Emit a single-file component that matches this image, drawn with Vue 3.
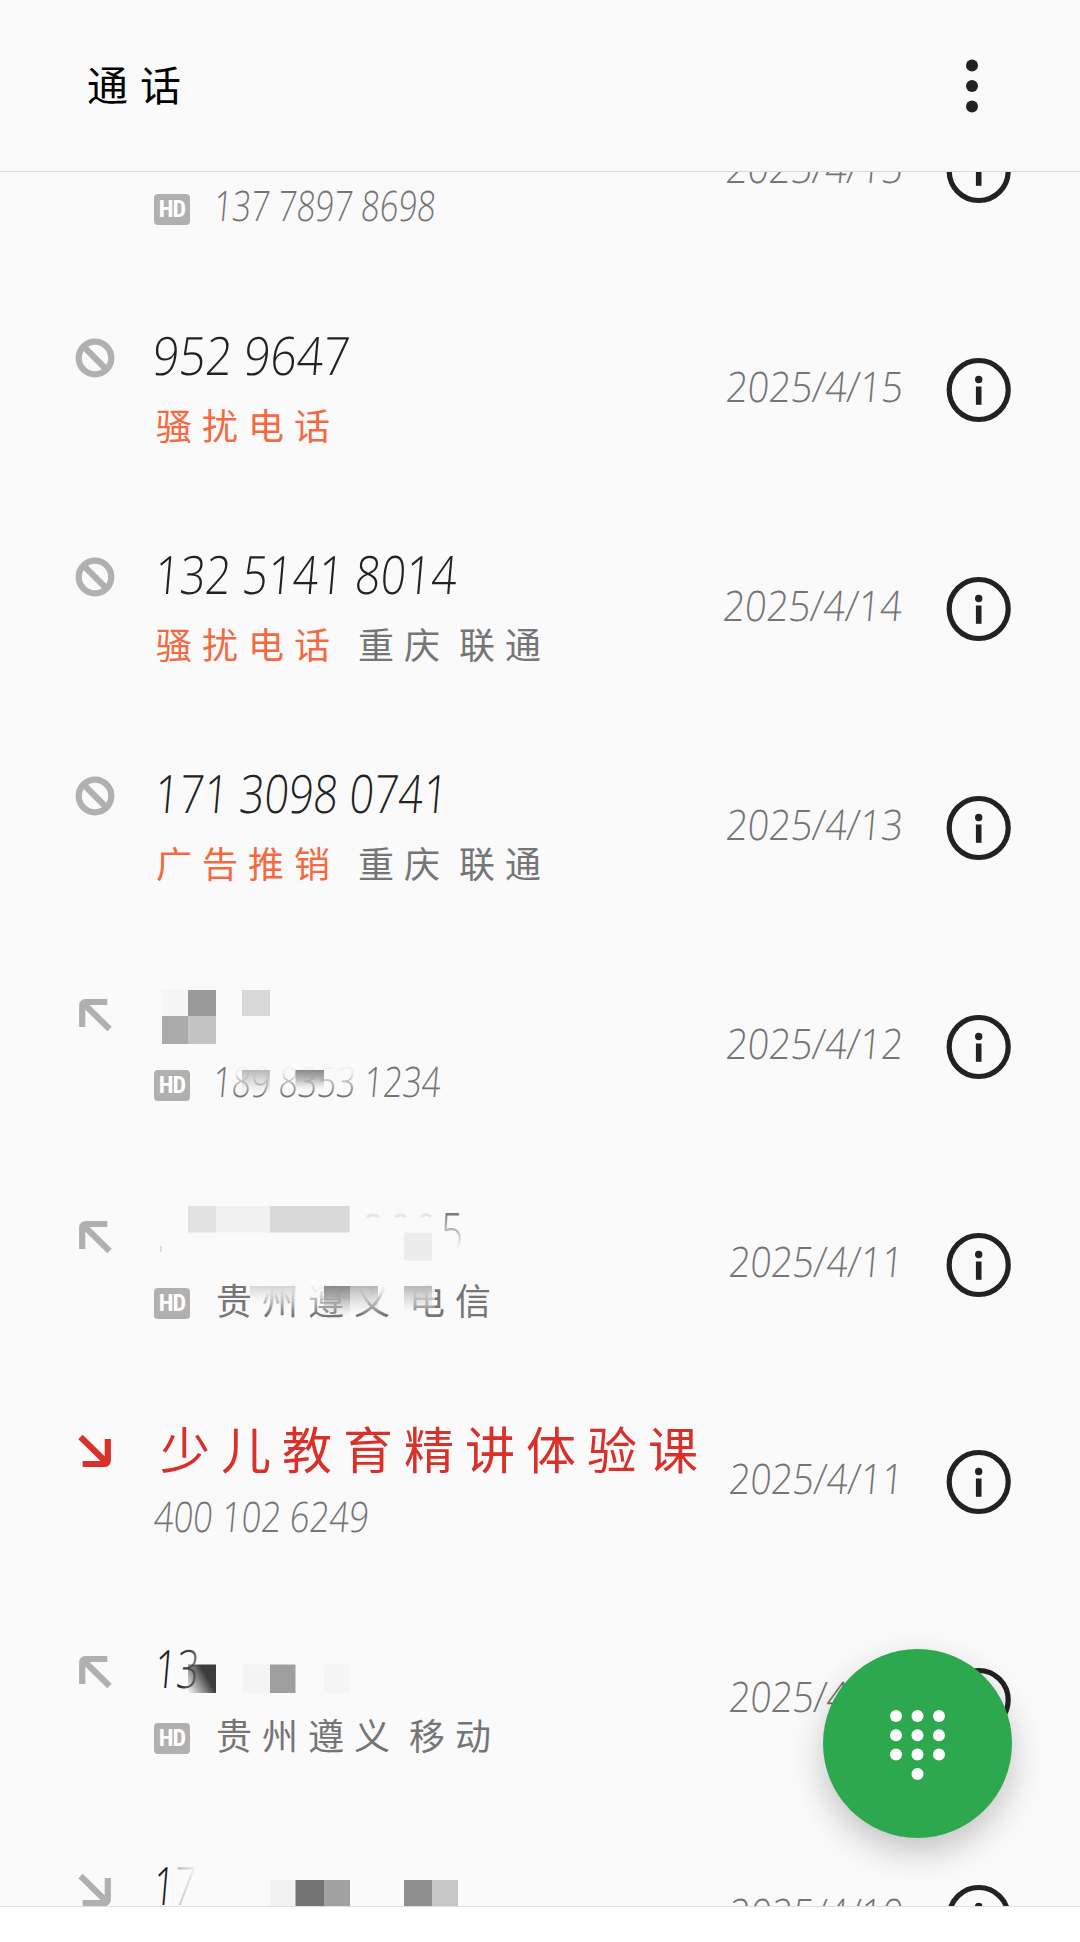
<script setup>
// x / w are the left edge and the width of a number inside its line
const calls = [
  { sub: '137 7897 8698', subX: 24, subW: 222, hd: true, date: '2025/4/15', dx: 3, dw: 177 },
  { icon: 'ban', title: '952 9647', x: -1, w: 197, tag: '骚扰电话', date: '2025/4/15', dx: 3, dw: 177 },
  { icon: 'ban', title: '132 5141 8014', x: 1, w: 302, tag: '骚扰电话', place: '重庆 联通', date: '2025/4/14', dx: 0, dw: 179 },
  { icon: 'ban', title: '171 3098 0741', x: 1, w: 293, tag: '广告推销', place: '重庆 联通', date: '2025/4/13', dx: 3, dw: 177 },
  { icon: 'out', sub: '189 8353 1234', subX: 23, subW: 228, hd: true, date: '2025/4/12', dx: 3, dw: 177 },
  { icon: 'out', low: true, hd: true, place: '贵州遵义 电信', date: '2025/4/11', dx: 6, dw: 174 },
  { icon: 'in', missed: true, name: '少儿教育精讲体验课', sub: '400 102 6249', subX: 0, subW: 215, date: '2025/4/11', dx: 6, dw: 174 },
  { icon: 'out', low: true, title: '13', x: 1, w: 44, fade: 'fade13', hd: true, place: '贵州遵义 移动', date: '2025/4/11', dx: 6, dw: 174 },
  { icon: 'in', low: true, title: '17', x: 0, w: 41, fade: 'fade17', date: '2025/4/10', dx: 6, dw: 174 },
]

// mosaic tiles: x, y, width, height, fill (y counts from the top of the list)
const tiles = [
  [162, 929, 26, 26, '#f5f5f5'], [188, 929, 28, 26, '#9a9a9a'],
  [162, 955, 26, 28, '#aaaaaa'], [188, 955, 28, 28, '#c4c4c4'],
  [242, 929, 28, 26, '#d8d8d8'],
  [242, 1009, 28, 24, 'url(#tileMid)'], [295.5, 1009, 28.5, 20, 'url(#tileDark)'],
  [188, 1145, 28, 26.5, '#e2e2e2'], [216, 1145, 54, 26.5, '#f1f1f1'], [270, 1145, 79.5, 26.5, '#d8d8d8'],
  [404, 1171.5, 28, 28, '#ececec'],
  [250, 1225, 20, 16, 'url(#tileLight)'], [270, 1225, 25.5, 22, 'url(#tileLight)'],
  [324, 1225, 26, 30, 'url(#tileDark)'], [350, 1225, 28, 28, 'url(#tileMid)'], [404, 1225, 28, 26, 'url(#tileMid)'],
  [188, 1603.5, 28, 28.5, 'url(#tileBlack)'], [243, 1603.5, 27, 28.5, '#f4f4f4'],
  [270, 1603.5, 25.5, 28.5, '#9f9f9f'], [324, 1603.5, 26, 28.5, '#f5f5f5'],
  [270, 1819, 25.5, 27.5, '#f2f2f2'], [295.5, 1819, 28.5, 27.5, '#747474'], [324, 1819, 26, 27.5, '#a1a1a1'],
  [404, 1819, 28, 27.5, '#8f8f8f'], [432, 1819, 26, 27.5, '#c7c7c7'],
]

const keys = [
  [8, 8], [29.5, 8], [51, 8],
  [8, 27.3], [29.5, 27.3], [51, 27.3],
  [8, 46.6], [29.5, 46.6], [51, 46.6],
  [29.5, 65.9],
]
</script>

<template>
  <div class="page">
    <header class="header">
      <h1>通话</h1>
      <svg class="more" width="14" height="56" viewBox="0 0 14 56">
        <circle cx="7" cy="7.5" r="6" />
        <circle cx="7" cy="28" r="6" />
        <circle cx="7" cy="48.5" r="6" />
      </svg>
    </header>

    <main class="viewport">
      <div class="list">
        <div v-for="(call, i) in calls" :key="i" class="row" :class="{ short: i > 4, low: call.low, missed: call.missed }">
          <div class="status">
            <svg v-if="call.icon === 'ban'" width="40" height="40" viewBox="0 0 40 40">
              <circle cx="20" cy="20" r="16.3" />
              <path d="M8.5 8.5L31.5 31.5" />
            </svg>
            <svg v-else-if="call.icon" :class="call.icon" width="40" height="40" viewBox="0 0 40 40">
              <path d="M32.3 7H10.5a3.3 3.3 0 0 0-3.3 3.3V32M8.5 8.5L34.5 34" />
            </svg>
          </div>

          <div class="info">
            <div class="line">
              <span v-if="call.name" class="name">{{ call.name }}</span>
              <svg v-if="call.title" class="digits big" width="320" height="70">
                <text :x="call.x" y="54.5" :textLength="call.w" lengthAdjust="spacingAndGlyphs" :class="call.fade">{{ call.title }}</text>
              </svg>
            </div>
            <div class="line second">
              <span v-if="call.hd" class="hd">HD</span>
              <span v-if="call.tag" class="tag">{{ call.tag }}</span>
              <svg v-if="call.sub" class="digits" :width="call.subX + call.subW" height="70">
                <text :x="call.subX" y="50" :textLength="call.subW" lengthAdjust="spacingAndGlyphs">{{ call.sub }}</text>
              </svg>
              <span v-if="call.place" class="place">{{ call.place }}</span>
            </div>
          </div>

          <svg class="digits date" width="180" height="70">
            <text :x="call.dx" y="47.5" :textLength="call.dw" lengthAdjust="spacingAndGlyphs">{{ call.date }}</text>
          </svg>

          <svg class="detail" width="66" height="66" viewBox="0 0 66 66">
            <circle cx="32.7" cy="33" r="29.5" fill="none" stroke="#222" stroke-width="5.2" />
            <circle cx="32.7" cy="22.5" r="3.7" fill="#222" />
            <path d="M29.9 29.5h5.6v18.3h-5.6z" fill="#222" />
          </svg>
        </div>

        <!-- mosaic over the private names and numbers -->
        <svg class="mosaic" width="560" height="1860">
          <defs>
            <linearGradient id="tileMid" x1="0" y1="0" x2="0" y2="1">
              <stop offset="0" stop-color="#aaa" stop-opacity=".85" /><stop offset="1" stop-color="#ccc" stop-opacity="0" />
            </linearGradient>
            <linearGradient id="tileDark" x1="0" y1="0" x2="0" y2="1">
              <stop offset="0" stop-color="#888" /><stop offset=".4" stop-color="#999" stop-opacity=".75" /><stop offset="1" stop-color="#bbb" stop-opacity="0" />
            </linearGradient>
            <linearGradient id="tileLight" x1="0" y1="0" x2="0" y2="1">
              <stop offset="0" stop-color="#ccc" stop-opacity=".8" /><stop offset="1" stop-color="#ddd" stop-opacity="0" />
            </linearGradient>
            <linearGradient id="tileBlack" x1="0" y1="1" x2="1" y2=".4">
              <stop offset="0" stop-color="#444" stop-opacity="0" /><stop offset=".75" stop-color="#3c3c3c" /><stop offset="1" stop-color="#3c3c3c" />
            </linearGradient>
            <linearGradient id="veil" x1="0" y1="0" x2="0" y2="1">
              <stop offset="0" stop-color="#fafafa" /><stop offset=".35" stop-color="#fafafa" stop-opacity=".9" /><stop offset="1" stop-color="#fafafa" stop-opacity="0" />
            </linearGradient>
            <linearGradient id="ink5" x1="0" y1="0" x2="0" y2="1">
              <stop offset=".2" stop-color="#666" /><stop offset=".5" stop-color="#bbb" /><stop offset=".75" stop-color="#fafafa" />
            </linearGradient>
            <linearGradient id="ink13" x1="0" y1="0" x2="1" y2="0">
              <stop offset=".5" stop-color="#1c1c1c" /><stop offset="1" stop-color="#777" />
            </linearGradient>
            <linearGradient id="ink17" x1="0" y1="0" x2="1" y2="0">
              <stop offset=".48" stop-color="#1c1c1c" /><stop offset=".55" stop-color="#bbb" /><stop offset="1" stop-color="#f2f2f2" />
            </linearGradient>
          </defs>
          <rect x="228" y="1000" width="126" height="34" fill="url(#veil)" />
          <rect x="250" y="1216" width="185" height="38" fill="url(#veil)" />
          <rect v-for="(t, i) in tiles" :key="i" :x="t[0]" :y="t[1]" :width="t[2]" :height="t[3]" :fill="t[4]" />
          <path d="M367 1156q6-4 12 0M395 1156q6-4 11 0M421 1156q5-5 10 0" fill="none" stroke="#e6e6e6" stroke-width="3" />
          <path d="M161 1185v6" stroke="#ddd" stroke-width="2" />
          <text class="five" x="441" y="1190" textLength="22" lengthAdjust="spacingAndGlyphs">5</text>
        </svg>
      </div>
    </main>

    <button class="fab">
      <svg width="59" height="74" viewBox="0 0 59 74">
        <circle v-for="(k, i) in keys" :key="i" :cx="k[0]" :cy="k[1]" r="6" />
      </svg>
    </button>
  </div>
</template>

<style>
body {
  margin: 0;
  background: #fff;
}
</style>

<style scoped>
.page {
  position: relative;
  width: 1080px;
  height: 1942px;
  overflow: hidden;
  background: #fff;
  color: #222;
  font-family: "Noto Sans CJK SC", sans-serif;
}

.header {
  display: flex;
  align-items: center;
  justify-content: space-between;
  box-sizing: border-box;
  height: 172px;
  padding: 0 101.5px 0 87px;
  border-bottom: 1px solid #d8d8d8;
  background: #fafafa;
}

.header h1 {
  margin: 0;
  color: #000;
  font-size: 41px;
  font-weight: 400;
  line-height: 60px;
  letter-spacing: 12px;
  padding-bottom: 6px;
}

.more {
  fill: #222;
  margin-top: 1px;
}

.viewport {
  box-sizing: border-box;
  height: 1735px;
  overflow: hidden;
  background: #fafafa;
  border-bottom: 1px solid #dedede;
}

.list {
  position: relative;
  margin-top: -111px;
}

.row {
  display: flex;
  align-items: center;
  height: 219px;
  padding: 0 68px 0 75px;
}

.row.short {
  height: 217.5px;
}

.status {
  width: 79px;
  height: 40px;
  margin-bottom: 63px;
}

.low .status {
  margin-bottom: 55px;
}

.status svg {
  display: block;
  fill: none;
  stroke: #b0b0b0;
  stroke-width: 6.2;
}

.status .in {
  transform: rotate(180deg);
}

.missed .status svg {
  stroke: #d9302a;
}

.info {
  flex: 1;
  min-width: 0;
}

.line {
  display: flex;
  align-items: center;
  height: 70px;
  white-space: nowrap;
}

.low .line:first-child {
  padding-top: 6px;
  height: 64px;
}

.digits {
  display: block;
  flex: none;
  overflow: visible;
  fill: #757575;
  font-family: "Open Sans", "Noto Sans", sans-serif;
  font-size: 42px;
  font-weight: 340;
  transform: skewX(-5deg);
}

.big {
  fill: #222;
  font-size: 53px;
}

.fade13 {
  fill: url(#ink13);
}

.fade17 {
  fill: url(#ink17);
}

.name {
  color: #d9302a;
  font-size: 50px;
  line-height: 70px;
  letter-spacing: 11px;
  margin-left: 6px;
}

.tag,
.place {
  font-size: 36px;
  line-height: 54px;
  letter-spacing: 10px;
  word-spacing: -9px;
  margin-bottom: 2px;
}

.tag {
  color: #f4693f;
  margin-left: 2px;
}

.place {
  color: #757575;
}

.tag + .place {
  margin-left: 18px;
}

.hd + .place {
  margin-left: 26px;
}

.hd {
  width: 36px;
  height: 31px;
  margin-top: 8px;
  border-radius: 4px;
  background: #b0b0b0;
  color: #fff;
  font: bold 24px/31px "Liberation Sans Narrow", "Roboto Condensed", "Roboto", sans-serif;
  letter-spacing: -1px;
  text-align: center;
}

.date {
  margin-right: 43px;
}

.detail {
  flex: none;
}

.mosaic {
  position: absolute;
  left: 0;
  top: 0;
}

.five {
  fill: url(#ink5);
  font: 300 53px "Open Sans", sans-serif;
}

.fab {
  position: absolute;
  left: 823px;
  top: 1649px;
  display: flex;
  align-items: center;
  justify-content: center;
  width: 189px;
  height: 189px;
  padding: 0;
  border: 0;
  border-radius: 50%;
  background: #2da84e;
  box-shadow: 0 14px 34px rgba(0, 0, 0, 0.22);
}

.fab svg {
  fill: #fff;
  margin-top: 2px;
}
</style>
